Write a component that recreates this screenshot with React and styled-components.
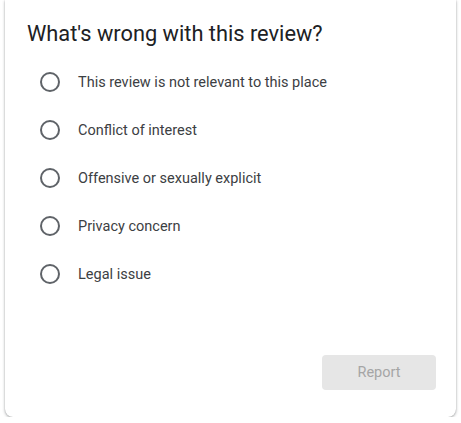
import React, { useState } from 'react'
import styled, { createGlobalStyle } from 'styled-components'

const GlobalStyle = createGlobalStyle`
  body {
    margin: 0;
    background: #ffffff;
    font-family: Roboto, "Liberation Sans", Arial, sans-serif;
  }
`

const Page = styled.div`
  padding: 0 5px;
`

const Card = styled.div`
  box-sizing: border-box;
  height: 417px;
  display: flex;
  flex-direction: column;
  padding: 20px 20px 27px 22px;
  background: #fff;
  border-radius: 0 0 8px 8px;
  box-shadow: 0 1px 3px rgba(60, 64, 67, 0.45), 0 0 1px rgba(60, 64, 67, 0.3);
`

const Title = styled.h2`
  margin: 0;
  font-size: 21.8px;
  line-height: 28px;
  font-weight: 400;
  color: #202124;
`

const Options = styled.div`
  display: flex;
  flex-direction: column;
  margin-top: 10px;
  padding-left: 13px;
`

const Option = styled.label`
  display: flex;
  align-items: center;
  gap: 18px;
  height: 48px;
  cursor: pointer;
  font-size: 14.5px;
  color: #3c4043;
`

const Circle = styled.span`
  box-sizing: border-box;
  width: 20px;
  height: 20px;
  border-radius: 50%;
  border: 2px solid ${({ checked }) => (checked ? '#1a73e8' : '#5f6368')};
  display: flex;
  align-items: center;
  justify-content: center;

  &::after {
    content: '';
    width: 10px;
    height: 10px;
    border-radius: 50%;
    background: #1a73e8;
    display: ${({ checked }) => (checked ? 'block' : 'none')};
  }
`

const Footer = styled.div`
  margin-top: auto;
  display: flex;
  justify-content: flex-end;
`

const Button = styled.button`
  width: 114px;
  height: 35px;
  border: none;
  border-radius: 4px;
  background: ${({ disabled }) => (disabled ? '#e6e6e6' : '#1a73e8')};
  color: ${({ disabled }) => (disabled ? '#a5a5a5' : '#fff')};
  font-family: inherit;
  font-size: 14.5px;
  padding: 0;
`

const reasons = [
  'This review is not relevant to this place',
  'Conflict of interest',
  'Offensive or sexually explicit',
  'Privacy concern',
  'Legal issue',
]

export default function App() {
  const [selected, setSelected] = useState(null)

  return (
    <Page>
      <GlobalStyle />
      <Card>
        <Title>What's wrong with this review?</Title>
        <Options>
          {reasons.map((r, i) => (
            <Option key={r} onClick={() => setSelected(i)}>
              <Circle checked={selected === i} />
              {r}
            </Option>
          ))}
        </Options>
        <Footer>
          <Button disabled={selected === null}>Report</Button>
        </Footer>
      </Card>
    </Page>
  )
}
